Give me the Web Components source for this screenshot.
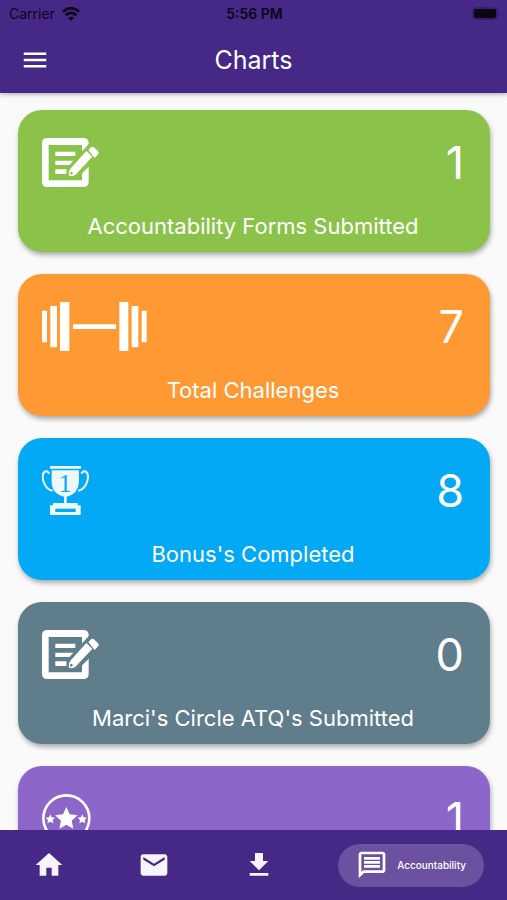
<!DOCTYPE html>
<html lang="en">
<head>
<meta charset="utf-8">
<meta name="viewport" content="width=device-width, initial-scale=1">
<title>Charts</title>
<style>
  body {
    margin: 0;
    background: #fafafa;
    font-family: Inter, "Liberation Sans", sans-serif;
  }
</style>
</head>
<body>
<charts-app></charts-app>

<script>
const ICONS = {
  menu: { box: '0 0 24 24', body: '<path d="M3 18h18v-2H3v2zm0-5h18v-2H3v2zm0-7v2h18V6H3z"/>' },
  wifi: { box: '0 0 54 42', body: `
    <path d="M27 42l-9-9q9-8 18 0z"/>
    <g fill="none" stroke="currentColor" stroke-width="8">
      <path d="M3 14Q27-7 51 14"/><path d="M11 25Q27 10 43 25"/>
    </g>` },
  battery: { box: '0 0 28 13', body: `
    <rect x="1" y="1" width="24" height="11" rx="3" fill="none" stroke="currentColor" opacity=".45"/>
    <rect x="2" y="2" width="22" height="9" rx="2"/>
    <path d="M26 4.500q2 2 0 4z" opacity=".45"/>` },
  form: { box: '0 0 171 147', body: `
    <path fill-rule="evenodd" d="M16 0h108q16 0 16 16v115q0 16-16 16H16q-16 0-16-16V16Q0 0 16 0zM20 21v106h100V21z"/>
    <path d="M40 41h60v13H40zM40 68h54v13H40zM40 94h34v14H40z"/>
    <path d="M74 121V90L141 17l36 33-72 71z" fill="var(--card-color)"/>
    <path d="M80 108q0-10 7-18l46-51 18 17-49 53q-6 6-15 6-7 0-7-7z"/>
    <path d="M139 36l8-8q5-4 9 0l12 12q4 5 0 9l-10 11z"/>
    <circle cx="88" cy="106" r="4" fill="var(--card-color)"/>` },
  dumbbell: { box: '0 0 315 147', body: `
    <path d="M0 26h15v95H0zM25 12h20v124H25zM54 0h28v147H54zM93 67h129v14H93zM232 0h27v147h-27zM269 12h20v124h-20zM299 26h15v95h-15z"/>` },
  trophy: { box: '0 0 141 147', body: `
    <g opacity=".93">
      <path d="M24 0h93v8H24zM29 13h82v35q-2 36-37 44v19h33v7h9v29H24v-29h9v-7h33V92Q30 84 29 48z"/>
      <path d="M22 23Q14 11 7 18C-4 29 5 70 32 74M118 23q8-12 15-5c11 11 2 52-25 56" fill="none" stroke="currentColor" stroke-width="6"/>
    </g>
    <path d="M40 128h61v10H40z" fill="var(--card-color)"/>
    <text x="69" y="77" text-anchor="middle" font-family="Liberation Serif" font-size="76" fill="var(--card-color)">1</text>` },
  stars: { box: '0 0 147 147', body: `
    <circle cx="73" cy="73" r="69" fill="none" stroke="currentColor" stroke-width="8"/>
    <path d="M73 39l10 22 24 3-18 16 5 24-21-12-21 12 5-24-18-16 24-3z"/>
    <path d="M25 61l4 9 10 1-7 7 2 10-9-5-9 5 2-10-7-7 10-1z"/>
    <path d="M121 61l4 9 10 1-7 7 2 10-9-5-9 5 2-10-7-7 10-1z"/>` },
  home: { box: '0 0 24 24', body: '<path d="M10 20v-6h4v6h5v-8h3L12 3 2 12h3v8z"/>' },
  mail: { box: '0 0 24 24', body: '<path d="M20 4H4c-1.100 0-2 .9-2 2v12c0 1.100.9 2 2 2h16c1.100 0 2-.9 2-2V6c0-1.100-.9-2-2-2zm0 4l-8 5-8-5V6l8 5 8-5v2z"/>' },
  download: { box: '0 0 24 24', body: '<path d="M19 9h-4V3H9v6H5l7 7 7-7zM5 18v2h14v-2H5z"/>' },
  message: { box: '0 0 24 24', body: '<path fill-rule="evenodd" d="M4 2h16c1.100 0 2 .9 2 2v12c0 1.100-.9 2-2 2H6l-4 4V4c0-1.100.9-2 2-2zm0 2v13.200L5.200 16H20V4zm2 2h12v2H6zm0 3h12v2H6zm0 3h12v2H6z"/>' }
};

class ChartIcon extends HTMLElement {
  constructor() {
    super();
    this.attachShadow({ mode: 'open' });
  }

  connectedCallback() {
    const icon = ICONS[this.getAttribute('name')];
    this.shadowRoot.innerHTML = `
      <style>
        :host { display: inline-flex; flex: none; }
        svg { display: block; width: 100%; height: 100%; fill: currentColor; }
      </style>
      <svg viewBox="${icon.box}" aria-hidden="true">${icon.body}</svg>
    `;
  }
}

class StatusBar extends HTMLElement {
  constructor() {
    super();
    this.attachShadow({ mode: 'open' }).innerHTML = `
      <style>
        :host {
          display: grid;
          grid-template-columns: 1fr auto 1fr;
          align-items: center;
          height: 27px;
          padding: 0 7px 0 9px;
          color: #0b0614;
          font-size: 14px;
          line-height: 20px;
        }
        .carrier { display: flex; align-items: center; gap: 7px; }
        .wifi { width: 18px; height: 14px; }
        .time { font-weight: 600; }
        .battery { justify-self: end; width: 28px; height: 13px; }
      </style>
      <span class="carrier">Carrier <chart-icon class="wifi" name="wifi"></chart-icon></span>
      <span class="time">5:56 PM</span>
      <chart-icon class="battery" name="battery"></chart-icon>
    `;
  }
}

class AppHeader extends HTMLElement {
  constructor() {
    super();
    this.attachShadow({ mode: 'open' }).innerHTML = `
      <style>
        :host {
          display: block;
          z-index: 1;
          background: #462887;
          color: #fff;
          box-shadow: 0 1px 5px rgba(0, 0, 0, .35);
        }
        .toolbar {
          display: grid;
          grid-template-columns: 1fr auto 1fr;
          align-items: center;
          height: 66px;
          padding: 0 20px;
        }
        button {
          justify-self: start;
          display: flex;
          padding: 0;
          border: 0;
          background: none;
          color: inherit;
        }
        chart-icon { width: 30px; height: 30px; }
        h1 { margin: 0; font-size: 25px; line-height: 32px; font-weight: 400; }
      </style>
      <status-bar></status-bar>
      <div class="toolbar">
        <button type="button" aria-label="Menu"><chart-icon name="menu"></chart-icon></button>
        <h1><slot></slot></h1>
      </div>
    `;
  }
}

class StatCard extends HTMLElement {
  constructor() {
    super();
    this.attachShadow({ mode: 'open' });
  }

  connectedCallback() {
    const icon = this.getAttribute('icon');
    this.shadowRoot.innerHTML = `
      <style>
        :host {
          --card-color: ${this.getAttribute('color')};
          display: flex;
          flex: none;
          flex-direction: column;
          justify-content: space-between;
          box-sizing: border-box;
          height: 142px;
          padding: 28px 26px 12px 24px;
          border-radius: 24px;
          background: var(--card-color);
          color: #fff;
          box-shadow: 1px 3px 5px rgba(0, 0, 0, .32);
        }
        .top { display: flex; justify-content: space-between; align-items: flex-start; }
        chart-icon { height: 49px; }
        .form { width: 57px; }
        .dumbbell { width: 105px; }
        .trophy { width: 47px; }
        .stars { width: 49px; }
        .value { font-size: 45px; line-height: 50px; }
        .label { margin: 0; font-size: 22px; line-height: 28px; text-align: center; }
      </style>
      <div class="top">
        <chart-icon class="${icon}" name="${icon}"></chart-icon>
        <span class="value">${this.getAttribute('value')}</span>
      </div>
      <p class="label"><slot></slot></p>
    `;
  }
}

class BottomNav extends HTMLElement {
  constructor() {
    super();
    this.attachShadow({ mode: 'open' }).innerHTML = `
      <style>
        :host { display: block; z-index: 1; background: #462887; }
        nav {
          display: flex;
          justify-content: space-between;
          align-items: center;
          height: 70px;
          padding: 0 23px;
        }
        button {
          display: flex;
          justify-content: center;
          align-items: center;
          gap: 9px;
          height: 43px;
          padding: 0 10px;
          border: 0;
          border-radius: 22px;
          background: none;
          color: #f7f4fb;
          font: 500 10px/16px Inter, "Liberation Sans", sans-serif;
        }
        button.active { padding: 0 18px; background: #6b519f; color: #fff; }
        chart-icon { width: 32px; height: 32px; }
      </style>
      <nav>
        <button type="button" aria-label="Home"><chart-icon name="home"></chart-icon></button>
        <button type="button" aria-label="Messages"><chart-icon name="mail"></chart-icon></button>
        <button type="button" aria-label="Downloads"><chart-icon name="download"></chart-icon></button>
        <button type="button" class="active"><chart-icon name="message"></chart-icon>Accountability</button>
      </nav>
    `;
  }
}

class ChartsApp extends HTMLElement {
  constructor() {
    super();
    this.attachShadow({ mode: 'open' }).innerHTML = `
      <style>
        :host { display: flex; flex-direction: column; height: 100vh; }
        main {
          display: flex;
          flex: 1;
          flex-direction: column;
          gap: 22px;
          min-height: 0;
          padding: 17px 17px 22px 18px;
          overflow-y: auto;
          scrollbar-width: none;
        }
      </style>
      <app-header>Charts</app-header>
      <main>
        <stat-card icon="form" value="1" color="#8bc34a">Accountability Forms Submitted</stat-card>
        <stat-card icon="dumbbell" value="7" color="#ff9933">Total Challenges</stat-card>
        <stat-card icon="trophy" value="8" color="#03a9f4">Bonus's Completed</stat-card>
        <stat-card icon="form" value="0" color="#607d8b">Marci's Circle ATQ's Submitted</stat-card>
        <stat-card icon="stars" value="1" color="#8c67c9"></stat-card>
      </main>
      <bottom-nav></bottom-nav>
    `;
  }
}

customElements.define('chart-icon', ChartIcon);
customElements.define('status-bar', StatusBar);
customElements.define('app-header', AppHeader);
customElements.define('stat-card', StatCard);
customElements.define('bottom-nav', BottomNav);
customElements.define('charts-app', ChartsApp);
</script>
</body>
</html>
